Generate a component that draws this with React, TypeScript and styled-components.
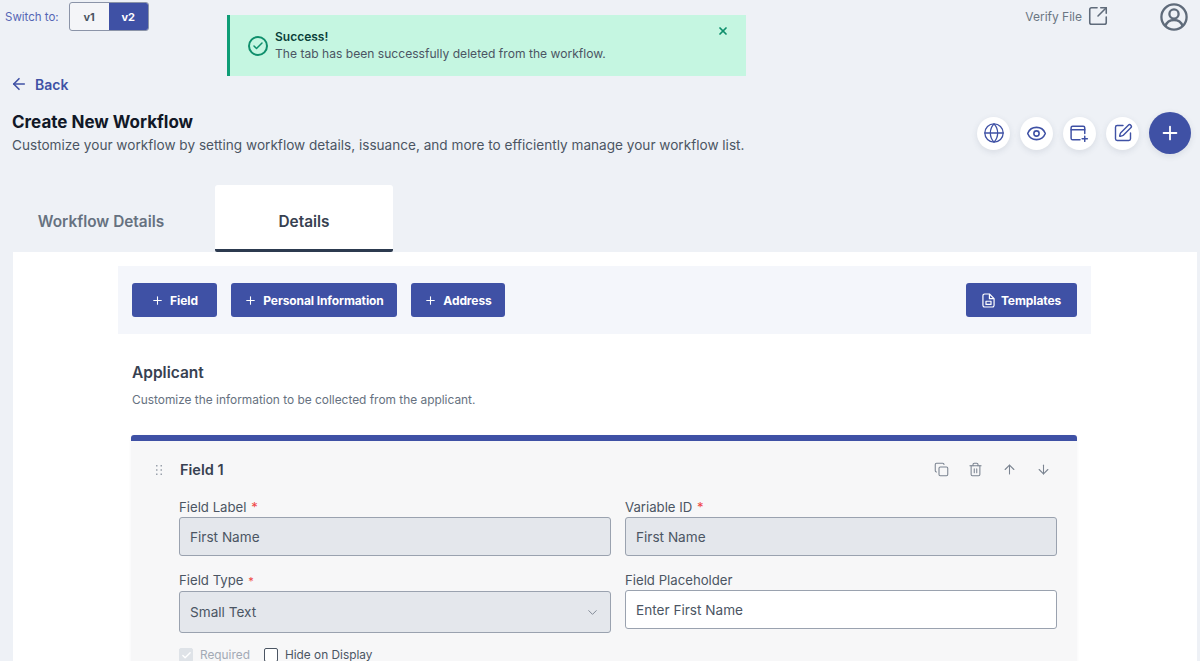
import React from "react";
import styled, { createGlobalStyle } from "styled-components";
import {
  ArrowDown,
  ArrowLeft,
  ArrowUp,
  Check,
  ChevronDown,
  Copy,
  Eye,
  Globe,
  Plus,
  SquareArrowOutUpRight,
  SquarePen,
  Trash2,
  X,
} from "lucide-react";

const BLUE = "#3f51a5";

const GlobalStyle = createGlobalStyle`
  html, body {
    margin: 0;
    padding: 0;
    background: #eef1f6;
    font-family: Inter, "Liberation Sans", sans-serif;
  }
  * { box-sizing: border-box; }
`;

const UserIcon = () => (
  <svg width="28" height="28" viewBox="0 0 28 28" fill="none" stroke="#5f6b7a" strokeWidth="2.3">
    <circle cx="14" cy="14" r="12.6" />
    <circle cx="14" cy="11" r="4.6" />
    <path d="M5.5 23c1.2-4 4.6-6 8.5-6s7.300 2 8.500 6" />
  </svg>
);

const WindowPlusIcon = () => (
  <svg width="21" height="21" viewBox="0 0 20 20" fill="none" stroke={BLUE} strokeWidth="1.4" strokeLinecap="round">
    <path d="M10.500 16H3.500a1.500 1.500 0 0 1-1.500-1.500V4.500A1.500 1.500 0 0 1 3.500 3h10A1.500 1.500 0 0 1 15 4.500V10" />
    <path d="M2 6.500h13" />
    <path d="M15 12.500v5M12.500 15h5" />
  </svg>
);

const TemplateIcon = () => (
  <svg width="13" height="15" viewBox="0 0 14 16" fill="none" stroke="#fff" strokeWidth="1.3" strokeLinejoin="round">
    <path d="M2.800 1h5.200L13 6v7.200A1.800 1.800 0 0 1 11.200 15H2.800A1.800 1.800 0 0 1 1 13.200V2.800A1.800 1.800 0 0 1 2.800 1Z" />
    <path d="M8 1v5h5" />
    <rect x="4.300" y="8.800" width="5.400" height="3.400" />
  </svg>
);

const DragIcon = () => (
  <svg width="6" height="10" viewBox="0 0 6 10" fill="#9aa1ab">
    {[0.75, 5, 9.25].map((y) =>
      [0.75, 5.25].map((x) => <rect key={`${x}-${y}`} x={x - 0.75} y={y - 0.75} width="1.5" height="1.5" />)
    )}
  </svg>
);

const App: React.FC = () => {
  return (
    <Page>
      <GlobalStyle />
      <TopBar>
        <SwitchGroup>
          <SwitchLabel>Switch to:</SwitchLabel>
          <Segmented>
            <Segment>v1</Segment>
            <Segment $active>v2</Segment>
          </Segmented>
        </SwitchGroup>
        <TopRight>
          <VerifyLink>
            Verify File
            <SquareArrowOutUpRight size={22} strokeWidth={1.7} color="#5f6b7a" />
          </VerifyLink>
          <UserIcon />
        </TopRight>
      </TopBar>

      <Toast>
        <ToastCheck>
          <Check size={12} strokeWidth={3} />
        </ToastCheck>
        <ToastText>
          <ToastTitle>Success!</ToastTitle>
          <ToastBody>The tab has been successfully deleted from the workflow.</ToastBody>
        </ToastText>
        <ToastClose>
          <X size={12} strokeWidth={3.5} />
        </ToastClose>
      </Toast>

      <BackLink>
        <ArrowLeft size={18} strokeWidth={2.2} />
        Back
      </BackLink>

      <HeaderRow>
        <div>
          <Title>Create New Workflow</Title>
          <Subtitle>
            Customize your workflow by setting workflow details, issuance, and more to efficiently manage your workflow
            list.
          </Subtitle>
        </div>
        <HeaderActions>
          <RoundButton>
            <Globe size={22} strokeWidth={1.4} color={BLUE} />
          </RoundButton>
          <RoundButton>
            <Eye size={21} strokeWidth={1.8} color={BLUE} />
          </RoundButton>
          <RoundButton>
            <WindowPlusIcon />
          </RoundButton>
          <RoundButton>
            <SquarePen size={20} strokeWidth={1.7} color={BLUE} />
          </RoundButton>
          <AddButton>
            <Plus size={22} strokeWidth={2} color="#fff" />
          </AddButton>
        </HeaderActions>
      </HeaderRow>

      <Tabs>
        <Tab>Workflow Details</Tab>
        <Tab $active>Details</Tab>
      </Tabs>

      <Panel>
        <Toolbar>
          <ToolbarGroup>
            <PrimaryButton $width={85}>
              <Plus size={13} strokeWidth={2} />
              Field
            </PrimaryButton>
            <PrimaryButton $width={166}>
              <Plus size={13} strokeWidth={2} />
              Personal Information
            </PrimaryButton>
            <PrimaryButton $width={94}>
              <Plus size={13} strokeWidth={2} />
              Address
            </PrimaryButton>
          </ToolbarGroup>
          <PrimaryButton $width={111}>
            <TemplateIcon />
            Templates
          </PrimaryButton>
        </Toolbar>

        <Section>
          <SectionTitle>Applicant</SectionTitle>
          <SectionText>Customize the information to be collected from the applicant.</SectionText>

          <FieldCard>
            <CardHead>
              <CardTitleWrap>
                <DragHandle>
                  <DragIcon />
                </DragHandle>
                <CardTitle>Field 1</CardTitle>
              </CardTitleWrap>
              <CardTools>
                <Copy size={15} strokeWidth={1.7} />
                <Trash2 size={15} strokeWidth={1.7} />
                <ArrowUp size={15} strokeWidth={1.7} />
                <ArrowDown size={15} strokeWidth={1.7} />
              </CardTools>
            </CardHead>

            <FormGrid>
              <FormField>
                <FieldLabel>
                  Field Label <Req>*</Req>
                </FieldLabel>
                <InputBox $disabled>First Name</InputBox>
              </FormField>
              <FormField>
                <FieldLabel>
                  Variable ID <Req>*</Req>
                </FieldLabel>
                <InputBox $disabled>First Name</InputBox>
              </FormField>
              <FormField>
                <FieldLabel>
                  Field Type <Req $small>*</Req>
                </FieldLabel>
                <SelectBox>
                  Small Text
                  <ChevronDown size={15} strokeWidth={1.5} color="#7b8491" />
                </SelectBox>
              </FormField>
              <FormField>
                <FieldLabel>Field Placeholder</FieldLabel>
                <InputBox>Enter First Name</InputBox>
              </FormField>
            </FormGrid>

            <CheckRow>
              <CheckItem $muted>
                <CheckBox $disabled>
                  <Check size={11} strokeWidth={3} color="#fff" />
                </CheckBox>
                Required
              </CheckItem>
              <CheckItem>
                <CheckBox />
                Hide on Display
              </CheckItem>
            </CheckRow>
          </FieldCard>
        </Section>
      </Panel>
    </Page>
  );
};

const Page = styled.div`
  position: relative;
  width: 1200px;
  height: 661px;
  overflow: hidden;
  background: #eef1f6;
`;

const TopBar = styled.div`
  display: flex;
  justify-content: space-between;
  align-items: flex-start;
  height: 76px;
  padding: 2px 12px 0 5px;
`;

const SwitchGroup = styled.div`
  display: flex;
  align-items: center;
  gap: 10px;
`;

const SwitchLabel = styled.span`
  font-size: 11.5px;
  color: #5566b5;
`;

const Segmented = styled.div`
  display: flex;
  width: 80px;
  height: 29px;
  border-radius: 3px;
  border: 1px solid #8b94a8;
  overflow: hidden;
  background: #f4f5f8;
`;

const Segment = styled.div<{ $active?: boolean }>`
  flex: 1;
  display: flex;
  align-items: center;
  justify-content: center;
  font-size: 11px;
  font-weight: 700;
  color: ${(p) => (p.$active ? "#fff" : "#4b5563")};
  background: ${(p) => (p.$active ? BLUE : "transparent")};
`;

const TopRight = styled.div`
  display: flex;
  align-items: center;
  gap: 51px;
  margin-top: 1px;
`;

const VerifyLink = styled.div`
  display: flex;
  align-items: center;
  gap: 5px;
  margin-top: -2px;
  font-size: 12px;
  color: #6b7683;
`;

const Toast = styled.div`
  position: absolute;
  left: 227px;
  top: 15px;
  width: 519px;
  height: 61px;
  display: flex;
  align-items: center;
  gap: 7px;
  padding: 0 20px 0 18px;
  background: #c5f6e1;
  border-left: 3px solid #0f9d76;
`;

const ToastCheck = styled.div`
  width: 20px;
  height: 20px;
  flex: none;
  display: flex;
  align-items: center;
  justify-content: center;
  border-radius: 50%;
  border: 2px solid #0f8f6c;
  color: #0f8f6c;
`;

const ToastText = styled.div`
  flex: 1;
`;

const ToastTitle = styled.div`
  font-size: 12px;
  line-height: 16px;
  font-weight: 600;
  color: #0b3f3a;
`;

const ToastBody = styled.div`
  font-size: 12.1px;
  line-height: 17px;
  color: #4b5563;
`;

const ToastClose = styled.div`
  position: absolute;
  right: 17px;
  top: 10px;
  color: #0f8f6c;
  display: flex;
`;

const BackLink = styled.div`
  display: flex;
  align-items: center;
  gap: 7px;
  height: 16px;
  padding-left: 10px;
  font-size: 14px;
  font-weight: 600;
  color: ${BLUE};
`;

const HeaderRow = styled.div`
  display: flex;
  justify-content: space-between;
  align-items: flex-start;
  margin-top: 11px;
  padding: 8px 9px 0 12px;
  height: 82px;
`;

const Title = styled.h1`
  margin: 0;
  font-size: 17px;
  line-height: 22px;
  font-weight: 700;
  color: #111827;
`;

const Subtitle = styled.p`
  margin: 2px 0 0;
  font-size: 13.6px;
  line-height: 20px;
  color: #4b5563;
`;

const HeaderActions = styled.div`
  display: flex;
  align-items: center;
  gap: 10px;
  margin-top: 1px;
`;

const RoundButton = styled.div`
  width: 33px;
  height: 33px;
  display: flex;
  align-items: center;
  justify-content: center;
  border-radius: 50%;
  background: #fff;
  box-shadow: 0 2px 6px rgba(60, 70, 100, 0.12);
`;

const AddButton = styled(RoundButton)`
  width: 42px;
  height: 42px;
  background: ${BLUE};
`;

const Tabs = styled.div`
  display: flex;
  gap: 25px;
  height: 67px;
  padding-left: 12px;
`;

const Tab = styled.div<{ $active?: boolean }>`
  width: 178px;
  display: flex;
  align-items: center;
  justify-content: center;
  padding-top: 8px;
  font-size: 15.4px;
  font-weight: 600;
  color: ${(p) => (p.$active ? "#374151" : "#667180")};
  background: ${(p) => (p.$active ? "#fff" : "transparent")};
  border-radius: ${(p) => (p.$active ? "3px 3px 2px 2px" : "0")};
  border-bottom: 3px solid ${(p) => (p.$active ? "#2c3a4f" : "transparent")};
`;

const Panel = styled.div`
  margin: 0 3px 0 13px;
  height: 420px;
  padding: 14px 106px 0 105px;
  background: #fff;
`;

const Toolbar = styled.div`
  display: flex;
  justify-content: space-between;
  align-items: center;
  height: 68px;
  padding: 0 14px;
  background: #f4f6fb;
`;

const ToolbarGroup = styled.div`
  display: flex;
  gap: 14px;
`;

const PrimaryButton = styled.div<{ $width: number }>`
  display: flex;
  align-items: center;
  justify-content: center;
  gap: 6px;
  width: ${(p) => p.$width}px;
  height: 34px;
  border-radius: 3px;
  background: ${BLUE};
  color: #fff;
  font-size: 12px;
  font-weight: 700;
  letter-spacing: -0.1px;
  white-space: nowrap;
`;

const Section = styled.div`
  padding: 29px 14px 0 13px;
`;

const SectionTitle = styled.h2`
  margin: 0;
  padding-left: 1px;
  font-size: 15.5px;
  line-height: 20px;
  font-weight: 600;
  color: #374151;
`;

const SectionText = styled.p`
  margin: 9px 0 0;
  padding-left: 1px;
  font-size: 11.9px;
  line-height: 16px;
  color: #667180;
`;

const FieldCard = styled.div`
  margin-top: 27px;
  height: 240px;
  background: #f7f7f8;
  border-top: 6px solid ${BLUE};
  border-radius: 3px 3px 0 0;
  padding: 0 20px 0 48px;
  box-shadow: 0 1px 3px rgba(60, 70, 100, 0.06);
`;

const CardHead = styled.div`
  position: relative;
  display: flex;
  justify-content: space-between;
  align-items: center;
  height: 44px;
  padding-top: 13px;
`;

const CardTitleWrap = styled.div`
  display: flex;
  align-items: center;
  padding-left: 1px;
`;

const DragHandle = styled.span`
  position: absolute;
  left: -23px;
  display: flex;
`;

const CardTitle = styled.h3`
  margin: 0;
  font-size: 14.5px;
  font-weight: 600;
  color: #374151;
`;

const CardTools = styled.div`
  display: flex;
  gap: 19px;
  padding-right: 6px;
  color: #7b8491;
`;

const FormGrid = styled.div`
  display: grid;
  grid-template-columns: 432px 432px;
  column-gap: 14px;
  row-gap: 17px;
  align-items: start;
  padding-top: 15px;
`;

const FormField = styled.div`
  display: flex;
  flex-direction: column;
`;

const FieldLabel = styled.label`
  font-size: 13.2px;
  line-height: 14px;
  margin-bottom: 3px;
  color: #4b5563;
`;

const Req = styled.span<{ $small?: boolean }>`
  color: #ef4444;
  font-size: ${(p) => (p.$small ? "11px" : "13px")};
  margin-left: 1px;
`;

const InputBox = styled.div<{ $disabled?: boolean }>`
  display: flex;
  align-items: center;
  height: 39px;
  padding: 0 11px 0 10px;
  border: 1px solid #9aa2af;
  border-radius: 3px;
  font-size: 13.6px;
  color: #4b5563;
  background: ${(p) => (p.$disabled ? "#e4e7ec" : "#fff")};
`;

const SelectBox = styled(InputBox)`
  height: 42px;
  justify-content: space-between;
  padding-right: 10px;
  background: #e4e7ec;
`;

const CheckRow = styled.div`
  display: flex;
  gap: 14px;
  margin-top: 15px;
`;

const CheckItem = styled.div<{ $muted?: boolean }>`
  display: flex;
  align-items: center;
  gap: 7px;
  font-size: 11.85px;
  line-height: 14px;
  color: ${(p) => (p.$muted ? "#a3aab5" : "#4b5563")};
`;

const CheckBox = styled.span<{ $disabled?: boolean }>`
  width: 14px;
  height: 14px;
  display: flex;
  align-items: center;
  justify-content: center;
  border-radius: 2px;
  border: 1px solid ${(p) => (p.$disabled ? "#dfe3e8" : "#4b5563")};
  background: ${(p) => (p.$disabled ? "#dfe3e8" : "#fff")};
`;

export default App;
